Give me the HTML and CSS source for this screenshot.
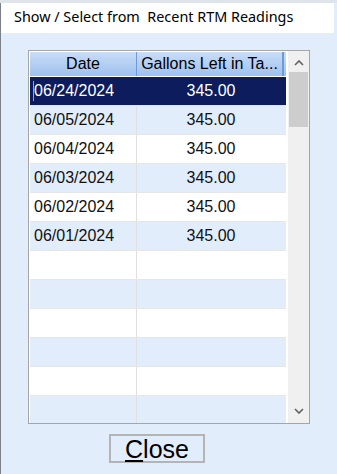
FILE: index.html
```html
<!DOCTYPE html>
<html lang="en">
<head>
    <meta charset="UTF-8">
    <title>Show / Select from Recent RTM Readings</title>
    <link rel="stylesheet" href="styles.css">
</head>
<body>
    <div class="backdrop"></div>
    <div class="window">
        <div class="titlebar">Show / Select from&nbsp; Recent RTM Readings</div>
        <div class="content">
            <div class="grid">
                <div class="table">
                    <div class="head">
                        <div class="cell date">Date</div>
                        <div class="cell gallons">Gallons Left in Ta...</div>
                    </div>
                    <div class="row selected">
                        <div class="cell date"><span class="caret"></span>06/24/2024</div>
                        <div class="cell gallons">345.00</div>
                    </div>
                    <div class="row alt">
                        <div class="cell date">06/05/2024</div>
                        <div class="cell gallons">345.00</div>
                    </div>
                    <div class="row">
                        <div class="cell date">06/04/2024</div>
                        <div class="cell gallons">345.00</div>
                    </div>
                    <div class="row alt">
                        <div class="cell date">06/03/2024</div>
                        <div class="cell gallons">345.00</div>
                    </div>
                    <div class="row">
                        <div class="cell date">06/02/2024</div>
                        <div class="cell gallons">345.00</div>
                    </div>
                    <div class="row alt">
                        <div class="cell date">06/01/2024</div>
                        <div class="cell gallons">345.00</div>
                    </div>
                    <div class="row"><div class="cell date"></div><div class="cell gallons"></div></div>
                    <div class="row alt"><div class="cell date"></div><div class="cell gallons"></div></div>
                    <div class="row"><div class="cell date"></div><div class="cell gallons"></div></div>
                    <div class="row alt"><div class="cell date"></div><div class="cell gallons"></div></div>
                    <div class="row"><div class="cell date"></div><div class="cell gallons"></div></div>
                    <div class="row alt"><div class="cell date"></div><div class="cell gallons"></div></div>
                </div>
                <div class="scrollbar">
                    <svg class="arrow" viewBox="0 0 10 6"><polyline points="1,5 5,1 9,5" fill="none" stroke="#606060" stroke-width="1.6"/></svg>
                    <div class="track">
                        <div class="thumb"></div>
                    </div>
                    <svg class="arrow" viewBox="0 0 10 6"><polyline points="1,1 5,5 9,1" fill="none" stroke="#606060" stroke-width="1.6"/></svg>
                </div>
            </div>
            <button class="close"><u>C</u>lose</button>
        </div>
    </div>
</body>
</html>
```

FILE: styles.css
```css
body {
    margin: 0;
    width: 337px;
    height: 474px;
    overflow: hidden;
    background: #e2edfc;
    font-family: "Liberation Sans", Arial, sans-serif;
    position: relative;
}
.backdrop {
    height: 3px;
    background: #dfe3ea;
}
.window {
    width: 333px;
    height: 471px;
    border-left: 1px solid #7a7f88;
    display: flex;
    flex-direction: column;
    background: #e2edfc;
}
.titlebar {
    height: 30px;
    background: #fff;
    font-family: "Noto Sans", "Open Sans", sans-serif;
    font-size: 14.4px;
    color: #000;
    padding-left: 13px;
    line-height: 28px;
}
.content {
    flex: 1;
    display: flex;
    flex-direction: column;
    align-items: flex-start;
    padding: 17px 0 0 27px;
}
.grid {
    width: 280px;
    height: 372px;
    border: 1px solid #a6a6a6;
    background: #fff;
    display: flex;
    overflow: hidden;
}
.table {
    width: 257px;
    padding: 1px 0 0 1px;
    display: flex;
    flex-direction: column;
}
.head {
    display: flex;
    height: 24px;
    background: linear-gradient(#c9ddf7, #9ec1ee);
    border-bottom: 1px solid #fff;
}
.head .cell {
    text-align: center;
    line-height: 24px;
    color: #000;
}
.head .date {
    border-right: 1px solid #6f9ad8;
}
.head .gallons {
    border-right: 2px solid #6f9ad8;
}
.cell {
    font-size: 16px;
    white-space: nowrap;
    overflow: hidden;
    box-sizing: border-box;
}
.date {
    width: 107px;
    border-right: 1px solid #e0e0e0;
}
.gallons {
    width: 148px;
    text-align: center;
}
.head .gallons {
    width: 147px;
    padding: 0 2px;
}
.row {
    display: flex;
    height: 29px;
    border-bottom: 1px solid #e6e6e6;
    box-sizing: border-box;
    line-height: 28px;
    color: #111;
    flex-shrink: 0;
}
.row .date {
    padding-left: 4px;
}
.row.alt {
    background: #e2edfc;
}
.row.selected {
    background: #0c1c5c;
    color: #fff;
}
.row.selected .date {
    border-right-color: #0c1c5c;
}
.caret {
    display: inline-block;
    width: 1px;
    height: 20px;
    background: #b8a36a;
    vertical-align: -5px;
    margin-left: -1px;
}
.scrollbar {
    width: 21px;
    margin-left: 2px;
    background: #f0f0f0;
    display: flex;
    flex-direction: column;
    align-items: center;
}
.arrow {
    width: 10px;
    height: 6px;
    margin: 9px 0;
    flex-shrink: 0;
}
.track {
    flex: 1;
    width: 100%;
}
.thumb {
    width: 19px;
    margin: -3px auto 0;
    height: 55px;
    background: #cdcdcd;
}
.close {
    margin: 10px 0 0 81px;
    width: 96px;
    height: 29px;
    padding: 0;
    border: 2px solid #b4b4b4;
    background: #e2edfc;
    font-family: "Liberation Sans", Arial, sans-serif;
    font-size: 25px;
    line-height: 24px;
    color: #000;
}
```
